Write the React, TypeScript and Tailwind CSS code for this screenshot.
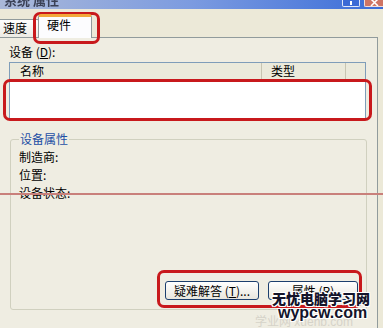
import React from "react";

const cn = "font-['Noto_Sans_CJK_SC','Noto_Sans',sans-serif]";

function TitleBar() {
  return (
    <div className="flex h-[9px] items-start overflow-hidden bg-gradient-to-r from-[#AAB8D8] via-[#7C9BE0] to-[#3A6CD8]">
      <div className="-mt-[8px] ml-[4px] text-[13px] leading-[16px] font-bold text-[#3b4156] blur-[0.6px]">
        系统 属性
      </div>
      <div className="ml-auto flex h-[7px] gap-[4px]">
        <div className="flex w-[18px] items-start justify-center rounded-b-[2px] border-x border-b border-[#dfe7fb] bg-[#3b6ad6]">
          <div className="mt-[1px] h-[4px] w-[2px] bg-white" />
        </div>
        <div className="flex w-[19px] items-start justify-center rounded-bl-[2px] border-b border-l border-[#f2dcd8] bg-[#cf7565]">
          <svg width="9" height="6" viewBox="0 0 9 6" className="mt-[0px]">
            <path d="M1 -1 L8 6 M8 -1 L1 6" stroke="#fff" strokeWidth="1.5" />
          </svg>
        </div>
      </div>
    </div>
  );
}

function Tabs() {
  return (
    <div className="flex h-[28px] items-end">
      <div className="-ml-[6px] h-[18px] w-[46px] rounded-t-[3px] border border-b-0 border-[#919B9C] bg-gradient-to-b from-[#FEFEFE] to-[#ECEBE4] pl-[8px] text-[12px] leading-[16px] text-black">
        速度
      </div>
      <div className="relative z-10 -mb-px -ml-[2px] h-[24px] w-[54px] rounded-t-[3px] border-x border-t-[3px] border-x-[#919B9C] border-t-[#F2A93B] bg-[#FCFCFE] pl-[8px] pt-[1px] text-[12px] leading-[14px] text-black">
        硬件
      </div>
    </div>
  );
}

function DeviceList() {
  return (
    <div className="mt-[3px] h-[57px] w-[357px] border border-[#7F9DB9] bg-white">
      <div className="flex h-[17px] border-b border-[#D6D2C2] bg-[#EBEADB] text-[12px] leading-[16px] text-black">
        <div className="w-[252px] border-r border-[#C7C5B2] pl-[10px]">名称</div>
        <div className="w-[84px] border-r border-[#C7C5B2] pl-[9px]">类型</div>
        <div className="flex-1" />
      </div>
    </div>
  );
}

function XpButton({ children, width }: { children: React.ReactNode; width: string }) {
  return (
    <button
      type="button"
      className={`h-[19px] ${width} rounded-[3px] border border-[#1C3F6E] bg-gradient-to-b from-[#FFFFFF] to-[#E8E6DD] text-[12px] leading-[16px] text-black`}
    >
      {children}
    </button>
  );
}

function Properties() {
  return (
    <fieldset className="ml-[1px] mt-[13px] flex h-[178px] w-[357px] flex-col rounded-[3px] border border-[#D0D0BF] px-[8px] pb-[9px]">
      <legend className="px-[1px] text-[12px] leading-[14px] text-[#1E4FA5]">设备属性</legend>
      <div className="mt-[4px] flex flex-col gap-[4px] text-[12px] leading-[14px] text-black">
        <div>制造商:</div>
        <div>位置:</div>
        <div>设备状态:</div>
      </div>
      <div className="mt-auto flex justify-end gap-[9px]">
        <XpButton width="w-[94px]">
          疑难解答 (<span className="underline">T</span>)...
        </XpButton>
        <XpButton width="w-[90px]">
          属性 (<span className="underline">R</span>)
        </XpButton>
      </div>
    </fieldset>
  );
}

export default function App() {
  return (
    <div className={`relative h-[328px] w-[383px] overflow-hidden bg-[#ECE9D8] ${cn}`}>
      <TitleBar />
      <Tabs />
      <div className="h-[300px] w-[378px] border-r border-t border-[#919B9C] bg-[#EFEDE2] pl-[9px]">
        <div className="mt-[7px] text-[12px] leading-[14px] text-black">
          设备 (<span className="underline">D</span>):
        </div>
        <DeviceList />
        <Properties />
      </div>

      {/* annotation overlays */}
      <div className="absolute left-[33px] top-[12px] h-[32px] w-[67px] rounded-[7px] border-[3px] border-[#C8191C]" />
      <div className="absolute left-[3px] top-[79px] h-[42px] w-[369px] rounded-[7px] border-[3px] border-[#C8191C]" />
      <div className="absolute left-[157px] top-[270px] h-[38px] w-[205px] rounded-[7px] border-[3px] border-[#C8191C]" />
      <div className="absolute left-0 top-[193px] h-[2px] w-full bg-[#C9807B]" />

      {/* watermark */}
      <div className="absolute left-[255px] top-[316px] text-[12px] leading-[12px] text-[#D6D3C9] font-['Liberation_Sans','Noto_Sans_CJK_SC',sans-serif]">
        学业网 xuehb.com
      </div>
      <div className="absolute left-[272px] top-[289px] text-[14px] leading-[18px] font-black text-[#14142a] [text-shadow:1px_1px_0_#fff,-1px_-1px_0_#fff,1px_-1px_0_#fff,-1px_1px_0_#fff]">
        无忧电脑学习网
      </div>
      <div className="absolute left-[278px] top-[303px] font-['Liberation_Sans',sans-serif] text-[16px] leading-[20px] font-bold text-[#14142a] [text-shadow:1px_1px_0_#fff,-1px_-1px_0_#fff,1px_-1px_0_#fff,-1px_1px_0_#fff]">
        wypcw.com
      </div>
    </div>
  );
}
